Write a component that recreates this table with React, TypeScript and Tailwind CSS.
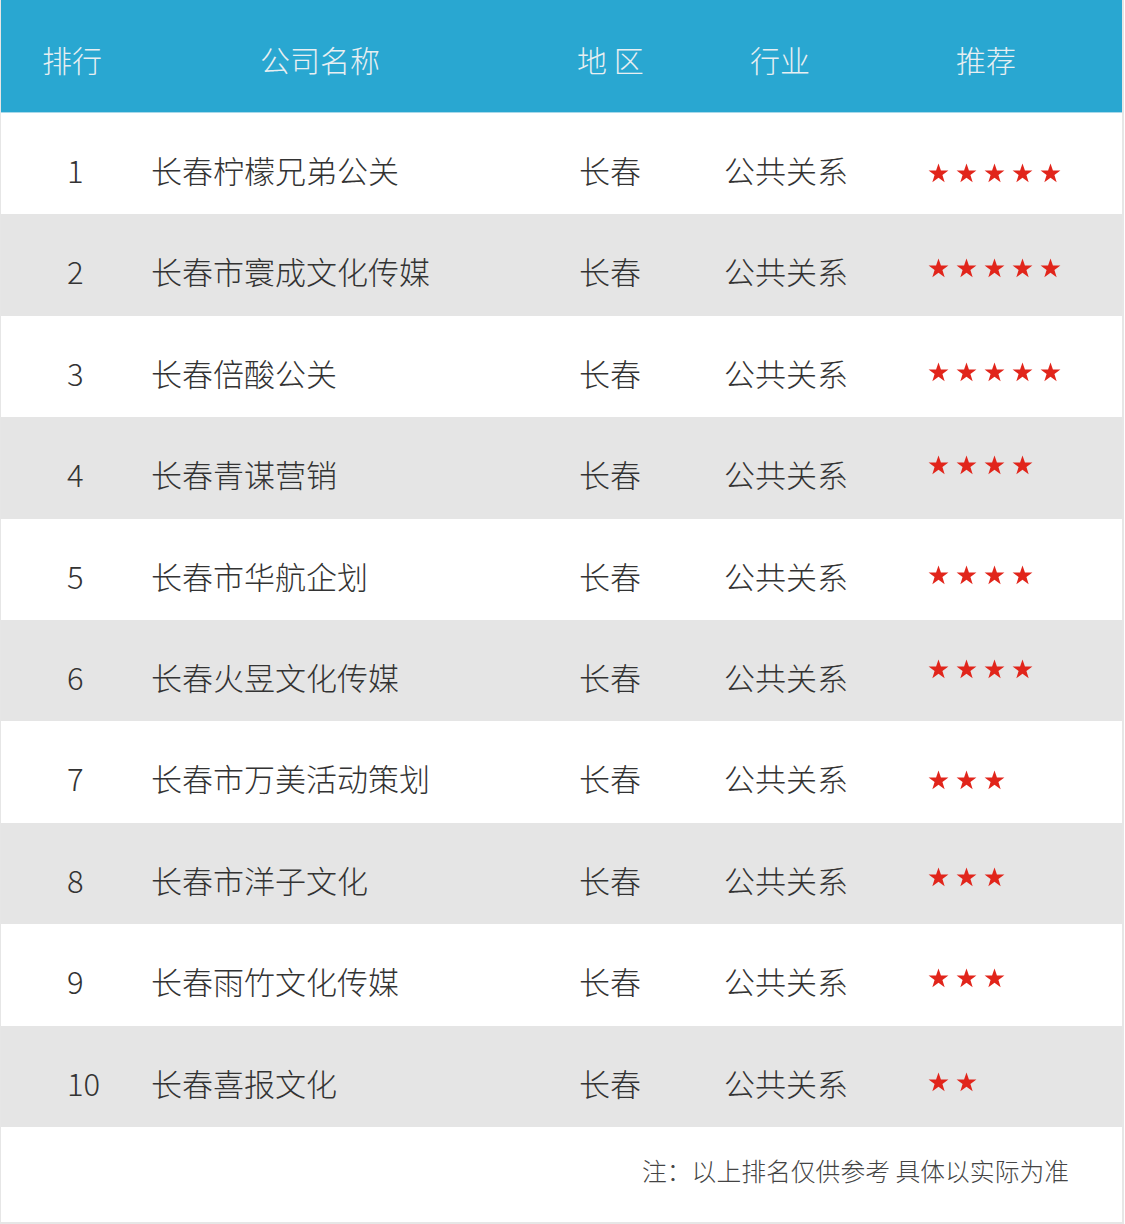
import type { FC } from "react";

type Row = {
	rank: number;
	name: string;
	stars: number;
	starTop: string;
};

const ROWS: Row[] = [
	{ rank: 1, name: "长春柠檬兄弟公关", stars: 5, starTop: "mt-[50px]" },
	{ rank: 2, name: "长春市寰成文化传媒", stars: 5, starTop: "mt-[44px]" },
	{ rank: 3, name: "长春倍酸公关", stars: 5, starTop: "mt-[46px]" },
	{ rank: 4, name: "长春青谋营销", stars: 4, starTop: "mt-[38px]" },
	{ rank: 5, name: "长春市华航企划", stars: 4, starTop: "mt-[46px]" },
	{ rank: 6, name: "长春火昱文化传媒", stars: 4, starTop: "mt-[39px]" },
	{ rank: 7, name: "长春市万美活动策划", stars: 3, starTop: "mt-[49px]" },
	{ rank: 8, name: "长春市洋子文化", stars: 3, starTop: "mt-[44px]" },
	{ rank: 9, name: "长春雨竹文化传媒", stars: 3, starTop: "mt-[44px]" },
	{ rank: 10, name: "长春喜报文化", stars: 2, starTop: "mt-[46px]" },
];

const FONT = "font-['Noto_Sans_CJK_SC',sans-serif] font-light";

const Star: FC = () => (
	<svg width="21" height="20" viewBox="0 0 24 23" className="shrink-0">
		<path
			d="M12 0.5l2.8 8.1h8.6l-6.9 5.1 2.6 8.3L12 16.9l-7.1 5.1 2.6-8.3L0.6 8.6h8.6z"
			fill="#e1251b"
		/>
	</svg>
);

const Stars: FC<{ count: number; className: string }> = ({ count, className }) => (
	<div className={`flex gap-[7px] ${className}`}>
		{Array.from({ length: count }, (_, i) => (
			<Star key={i} />
		))}
	</div>
);

const TableRow: FC<{ row: Row; striped: boolean }> = ({ row, striped }) => (
	<div
		className={`flex h-[101.4px] items-start ${striped ? "bg-[#e5e5e5]" : "bg-white"}`}
	>
		<div className="flex w-[928px] shrink-0 items-start pt-[37px] text-[31px] leading-[40px] text-[#333]">
			<div className="w-[150px] shrink-0 pl-[66px]">{row.rank}</div>
			<div className="w-[428px] shrink-0">{row.name}</div>
			<div className="w-[145px] shrink-0">长春</div>
			<div className="w-[203px] shrink-0">公共关系</div>
		</div>
		<Stars count={row.stars} className={`-ml-[1px] ${row.starTop}`} />
	</div>
);

export default function App() {
	return (
		<div className={`h-[1224px] w-[1125px] bg-white ${FONT}`}>
			<div className="w-[1124px] border-b-2 border-l border-r-2 border-[#e6e6e6]">
				<div className="flex h-[113px] items-center border-b border-[#a9d9ea] bg-[#29a7d1] pt-[6px] text-[30px] leading-[40px] text-[#e8eff2]">
					<div className="w-[259px] shrink-0 pl-[41px]">排行</div>
					<div className="w-[317px] shrink-0">公司名称</div>
					<div className="w-[173px] shrink-0">地 区</div>
					<div className="w-[206px] shrink-0">行业</div>
					<div>推荐</div>
				</div>

				{ROWS.map((row, i) => (
					<TableRow key={row.rank} row={row} striped={i % 2 === 1} />
				))}

				<div className="h-[95px] pl-[641px] pt-[27px] text-[24.8px] leading-[32px] text-[#444]">
					注：以上排名仅供参考 具体以实际为准
				</div>
			</div>
		</div>
	);
}
